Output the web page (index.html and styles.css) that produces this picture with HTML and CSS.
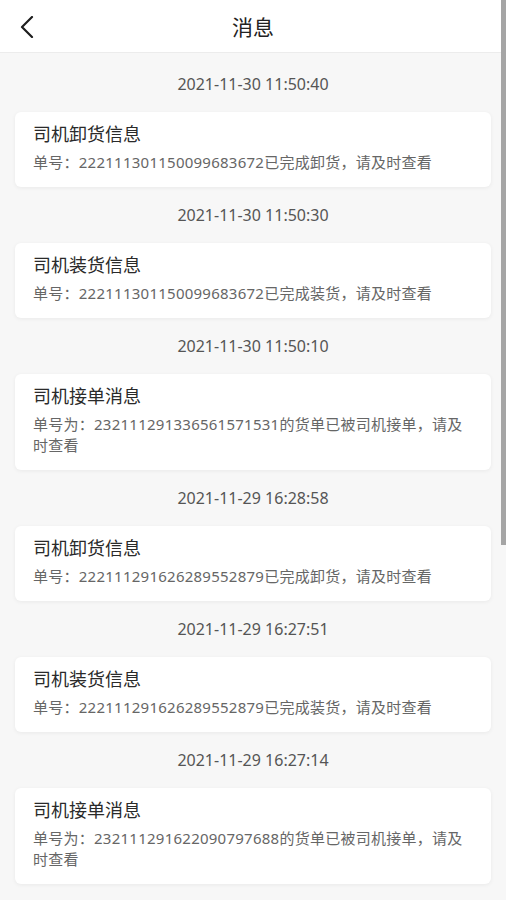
FILE: index.html
```html
<!DOCTYPE html>
<html>
  <head>
    <meta charset="utf-8">
    <title>消息</title>
    <link rel="stylesheet" href="styles.css">
  </head>
  <body>
    <div class="header">
      <span class="back">
        <svg width="14" height="22" viewBox="0 0 14 22">
          <path d="M12 1 L2 11 L12 21" fill="none" stroke="#1e1e1e" stroke-width="2.2" stroke-linecap="round" stroke-linejoin="round"/>
        </svg>
      </span>
      <h1 class="header-title">消息</h1>
    </div>

    <div class="message-list">
      <div class="msg-time">2021-11-30 11:50:40</div>
      <div class="msg-card">
        <div class="msg-title">司机卸货信息</div>
        <div class="msg-body">单号：222111301150099683672已完成卸货，请及时查看</div>
      </div>

      <div class="msg-time">2021-11-30 11:50:30</div>
      <div class="msg-card">
        <div class="msg-title">司机装货信息</div>
        <div class="msg-body">单号：222111301150099683672已完成装货，请及时查看</div>
      </div>

      <div class="msg-time">2021-11-30 11:50:10</div>
      <div class="msg-card">
        <div class="msg-title">司机接单消息</div>
        <div class="msg-body">单号为：232111291336561571531的货单已被司机接单，请及时查看</div>
      </div>

      <div class="msg-time">2021-11-29 16:28:58</div>
      <div class="msg-card">
        <div class="msg-title">司机卸货信息</div>
        <div class="msg-body">单号：222111291626289552879已完成卸货，请及时查看</div>
      </div>

      <div class="msg-time">2021-11-29 16:27:51</div>
      <div class="msg-card">
        <div class="msg-title">司机装货信息</div>
        <div class="msg-body">单号：222111291626289552879已完成装货，请及时查看</div>
      </div>

      <div class="msg-time">2021-11-29 16:27:14</div>
      <div class="msg-card">
        <div class="msg-title">司机接单消息</div>
        <div class="msg-body">单号为：232111291622090797688的货单已被司机接单，请及时查看</div>
      </div>
    </div>

    <div class="scroll-thumb"></div>
  </body>
</html>
```

FILE: styles.css
```css
html, body {
  overflow: hidden;
}
body {
  margin: 0;
  background-color: #f7f7f7;
  font-family: "Noto Sans", "Noto Sans CJK SC", sans-serif;
  color: #333;
}
.header {
  height: 52px;
  background-color: white;
  border-bottom: 1px solid #ececec;
  display: flex;
  align-items: center;
  justify-content: center;
  position: relative;
}
.back {
  position: absolute;
  left: 20px;
  top: 16px;
  display: flex;
}
.header-title {
  margin: 0;
  font-size: 21px;
  font-weight: normal;
  color: #222;
}
.message-list {
  padding: 3px 15px 10px 15px;
}
.msg-time {
  height: 56px;
  line-height: 56px;
  text-align: center;
  font-size: 16px;
  color: #555;
}
.msg-card {
  background-color: white;
  border-radius: 6px;
  box-shadow: 0 1px 4px rgba(0, 0, 0, 0.06);
  padding: 10px 20px 14px 18px;
}
.msg-title {
  font-size: 18px;
  line-height: 24px;
  color: #2a2a2a;
}
.msg-body {
  margin-top: 6px;
  font-size: 15px;
  line-height: 21px;
  letter-spacing: 0.25px;
  color: #666;
}
.scroll-thumb {
  position: fixed;
  top: 0;
  right: 0;
  width: 5px;
  height: 545px;
  background-color: #a5a5a5;
}
```
